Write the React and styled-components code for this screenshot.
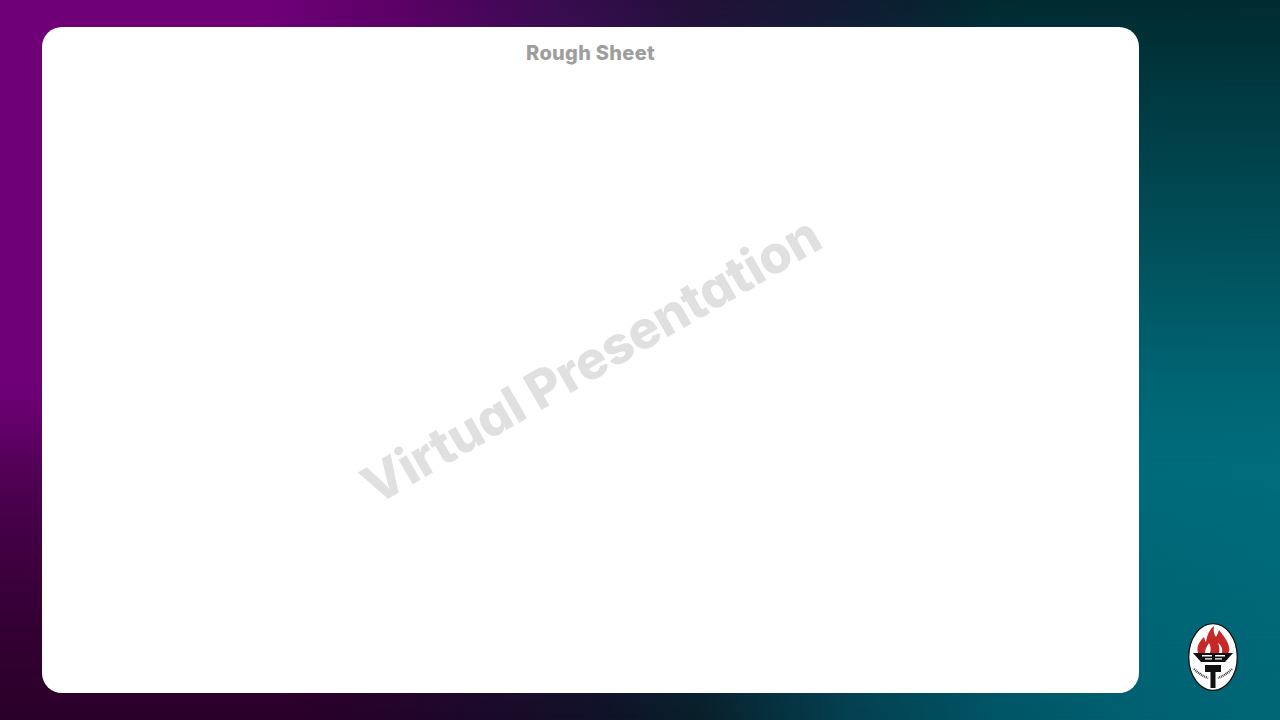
import React from "react";
import styled, { createGlobalStyle } from "styled-components";

const Global = createGlobalStyle`
  html, body { margin: 0; padding: 0; height: 100%; }
  #root { height: 100%; }
`;

const Page = styled.div`
  position: relative;
  width: 1280px;
  height: 720px;
  box-sizing: border-box;
  padding: 27px 0 27px 42px;
  display: flex;
  overflow: hidden;
  font-family: Inter, "Liberation Sans", sans-serif;
  background: linear-gradient(90deg, #2a0028 0, #2a0028 300px, #1a0a28 500px, #101228 600px, #08202a 700px, #044050 850px, #005565 1000px, #006272 1150px, #006676 1280px);

  &::before {
    content: "";
    position: absolute;
    inset: 0;
    background: linear-gradient(90deg, #700078 0, #700078 200px, #007282 1000px, #007282 1280px);
    mask-image: linear-gradient(180deg, #000 0, #000 380px, rgba(0, 0, 0, .46) 500px, rgba(0, 0, 0, .2) 600px, transparent 720px);
  }

  &::after {
    content: "";
    position: absolute;
    inset: 0;
    background: linear-gradient(90deg, #700078 0, #700078 260px, #5c0066 400px, #3a0a50 550px, #221038 700px, #111a30 850px, #002a30 1000px, #002b30 1280px);
    mask-image: linear-gradient(180deg, #000 0, transparent 470px);
  }
`;

const Sheet = styled.main`
  position: relative;
  z-index: 1;
  width: 1097px;
  height: 666px;
  flex: none;
  background: #fff;
  border-radius: 20px;
  display: flex;
  flex-direction: column;
  align-items: center;
  overflow: hidden;
`;

const Title = styled.h1`
  margin: 13px 0 0;
  font-size: 20px;
  line-height: 27px;
  font-weight: 800;
  color: #9e9e9e;
  letter-spacing: 0.3px;
  font-feature-settings: "cv11" 1;
`;

const Watermark = styled.div`
  position: absolute;
  left: 50%;
  top: 50%;
  transform: translate(-50%, -50%) rotate(-30deg);
  white-space: nowrap;
  font-size: 52px;
  font-weight: 800;
  letter-spacing: -0.15px;
  color: #e0e0e0;
  font-feature-settings: "cv11" 1;
`;

const Aside = styled.aside`
  position: relative;
  z-index: 1;
  flex: 1;
  display: flex;
  align-items: flex-end;
  justify-content: center;
  padding: 0 0 2px 8px;
  margin-right: 2px;
`;

const Emblem = () => (
  <svg width="50" height="68" viewBox="0 0 50 68" role="img" aria-label="Emblem">
    <ellipse cx="25" cy="34" rx="24.3" ry="33.3" fill="#fff" stroke="#111" strokeWidth="1.3" />
    <path d="M10 30C8 23 12 18 16 14C17 17 17 18 18 19C19 13 21 7 26 3C25 8 26 11 28 14C29 12 30 10 31 7C35 12 40 18 41 24C42 27 41 29 40 30Z" fill="#c62828" />
    <path d="M17 30C17 26 19 23 21 20C23 23 23 27 22 30ZM31 30C32 26 31 23 30 20C33 22 35 26 34 30Z" fill="#fff" />
    <path d="M5 30H45L37 39H13Z" fill="#111" />
    <path d="M14 32H24V33.4H14ZM17 35.2H24V36.6H17ZM27 32H37V33.4H27ZM27 35.2H34V36.6H27Z" fill="#fff" />
    <path d="M17 42H33V49H27.5V65H22.5V49H17Z" fill="#111" />
    <path d="M6 46Q12 52 20 55M44 46Q38 52 30 55" fill="none" stroke="#444" strokeWidth="2.4" strokeDasharray="1 .8" />
  </svg>
);

export default function App() {
  return (
    <Page>
      <Global />
      <Sheet>
        <Title>Rough Sheet</Title>
        <Watermark>Virtual Presentation</Watermark>
      </Sheet>
      <Aside>
        <Emblem />
      </Aside>
    </Page>
  );
}
